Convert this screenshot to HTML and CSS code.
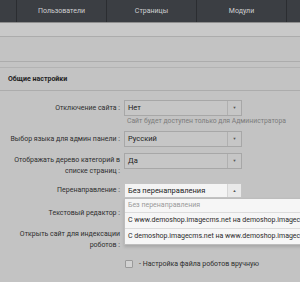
FILE: index.html
```html
<!DOCTYPE html>
<html lang="ru">
<head>
    <meta charset="UTF-8">
    <title>Общие настройки</title>
    <link rel="stylesheet" href="styles.css">
</head>
<body>
    <nav class="topnav">
        <div class="nav-edge"></div>
        <a class="nav-item">Пользователи</a>
        <a class="nav-item">Страницы</a>
        <a class="nav-item">Модули</a>
        <div class="nav-edge"></div>
    </nav>

    <div class="toolbar"></div>
    <div class="subbar"></div>

    <div class="section-title">Общие настройки</div>

    <div class="form">
        <div class="row row-site">
            <label class="label">Отключение сайта :</label>
            <div class="control">
                <div class="select"><span class="value">Нет</span><span class="arrow">▼</span></div>
                <div class="hint">Сайт будет доступен только для Администратора</div>
            </div>
        </div>

        <div class="row row-lang">
            <label class="label">Выбор языка для админ панели :</label>
            <div class="control">
                <div class="select"><span class="value">Русский</span><span class="arrow">▼</span></div>
            </div>
        </div>

        <div class="row row-tree">
            <label class="label label-two">Отображать дерево категорий в<br>списке страниц :</label>
            <div class="control">
                <div class="select"><span class="value">Да</span><span class="arrow">▼</span></div>
            </div>
        </div>

        <div class="row row-redirect">
            <label class="label">Перенаправление :</label>
            <div class="control">
                <div class="select select-open"><span class="value">Без перенаправления</span><span class="arrow">▲</span></div>
                <ul class="dropdown">
                    <li class="option option-empty">Без перенаправления</li>
                    <li class="option">С www.demoshop.imagecms.net на demoshop.imagecms.net</li>
                    <li class="option">С demoshop.imagecms.net на www.demoshop.imagecms.net</li>
                </ul>
            </div>
        </div>

        <!-- these two selects sit under the open list -->
        <div class="row row-editor">
            <label class="label">Текстовый редактор :</label>
            <div class="control">
                <div class="select"><span class="value"></span><span class="arrow"></span></div>
            </div>
        </div>

        <div class="row row-robots">
            <label class="label label-two">Открыть сайт для индексации<br>роботов :</label>
            <div class="control">
                <div class="select"><span class="value"></span><span class="arrow"></span></div>
            </div>
        </div>

        <div class="row row-check">
            <div class="label"></div>
            <div class="control check-line">
                <span class="checkbox"></span>
                <span>- Настройка файла роботов вручную</span>
            </div>
        </div>
    </div>
</body>
</html>
```

FILE: styles.css
```css
/* Base */
html, body {
    margin: 0;
    padding: 0;
}

body {
    width: 300px;
    height: 282px;
    overflow: hidden;
    background-color: #c3c3c3;
    color: #2e2e2e;
    font-family: Roboto, "Liberation Sans", Arial, sans-serif;
    font-size: 7px;
}

/* Top navigation */
.topnav {
    display: flex;
    height: 22px;
    background-color: #3b3e43;
    border-bottom: 1px solid #8e8e8e;
}

.nav-edge {
    width: 16px;
    flex: none;
}

.nav-edge:last-child {
    flex: 1;
    border-left: 1px solid #2b2d31;
}

.nav-item {
    width: 89px;
    flex: none;
    border-left: 1px solid #2b2d31;
    line-height: 22px;
    text-align: center;
    color: #cfd0d2;
    font-size: 7px;
}

/* Bars under the nav */
.toolbar {
    height: 13px;
    background-color: #c9c9c9;
    border-bottom: 1px solid #acacac;
}

.subbar {
    height: 24px;
    border-bottom: 1px solid #acacac;
}

.section-title {
    margin-top: 5px;
    border-top: 1px solid #b3b3b3;
    border-bottom: 1px solid #acacac;
    height: 22px;
    line-height: 22px;
    padding-left: 8px;
    font-weight: bold;
    color: #1e1e1e;
    font-size: 7px;
}

/* Form */
.form {
    padding-top: 9px;
}

.row {
    display: flex;
    align-items: flex-start;
}

.label {
    width: 124px;
    flex: none;
    padding-right: 4px;
    box-sizing: border-box;
    text-align: right;
    line-height: 16px;
    color: #2e2e2e;
}

.label-two {
    line-height: 11px;
    padding-top: 2px;
}

.control {
    position: relative;
    flex: none;
    width: 172px;
}

.select {
    display: flex;
    width: 118px;
    height: 16px;
    box-sizing: border-box;
    border: 1px solid #a7a7a7;
    background-color: #c6c6c6;
    line-height: 14px;
}

.select .value {
    flex: 1;
    padding-left: 3px;
    color: #222;
    font-size: 7.5px;
    white-space: nowrap;
    overflow: hidden;
}

.select .arrow {
    width: 13px;
    flex: none;
    border-left: 1px solid #b0b0b0;
    text-align: center;
    font-size: 4px;
    color: #555;
}

.hint {
    line-height: 11px;
    padding-left: 3px;
    color: #7b7b7b;
    font-size: 6.8px;
    white-space: nowrap;
}

.row-lang {
    margin-top: 4px;
}

.row-tree {
    margin-top: 6px;
}

.row-redirect {
    margin-top: 6px;
}

.row-redirect .label {
    line-height: 15px;
}

.select-open {
    height: 15px;
    background-color: #f4f4f4;
    border-color: #c4c4c4;
    line-height: 13px;
}

.select-open .arrow {
    background-color: #e9e9e9;
    border-left-color: #d6d6d6;
}

/* Open select list */
.dropdown {
    position: absolute;
    top: 15px;
    left: 0;
    width: 240px;
    margin: 0;
    padding: 0;
    list-style: none;
    background-color: #f6f6f6;
    border: 1px solid #bdbdbd;
    box-shadow: 0 2px 3px rgba(0, 0, 0, 0.15);
    z-index: 2;
}

.option {
    height: 15px;
    line-height: 15px;
    padding-left: 3px;
    border-top: 1px solid #dcdcdc;
    color: #2a2a2a;
    font-size: 7px;
    white-space: nowrap;
}

.option-empty {
    height: 13px;
    line-height: 13px;
    border-top: none;
    color: #9a9a9a;
    font-size: 7px;
}

.row-editor {
    margin-top: 7px;
}

.row-robots {
    margin-top: 6px;
}

.row-check {
    margin-top: 7px;
}

.check-line {
    display: flex;
    align-items: center;
    height: 12px;
    padding-left: 1px;
    color: #2e2e2e;
}

.checkbox {
    width: 6px;
    height: 6px;
    margin-right: 6px;
    border: 1px solid #9a9a9a;
    background-color: #d2d2d2;
    border-radius: 1px;
}
```
